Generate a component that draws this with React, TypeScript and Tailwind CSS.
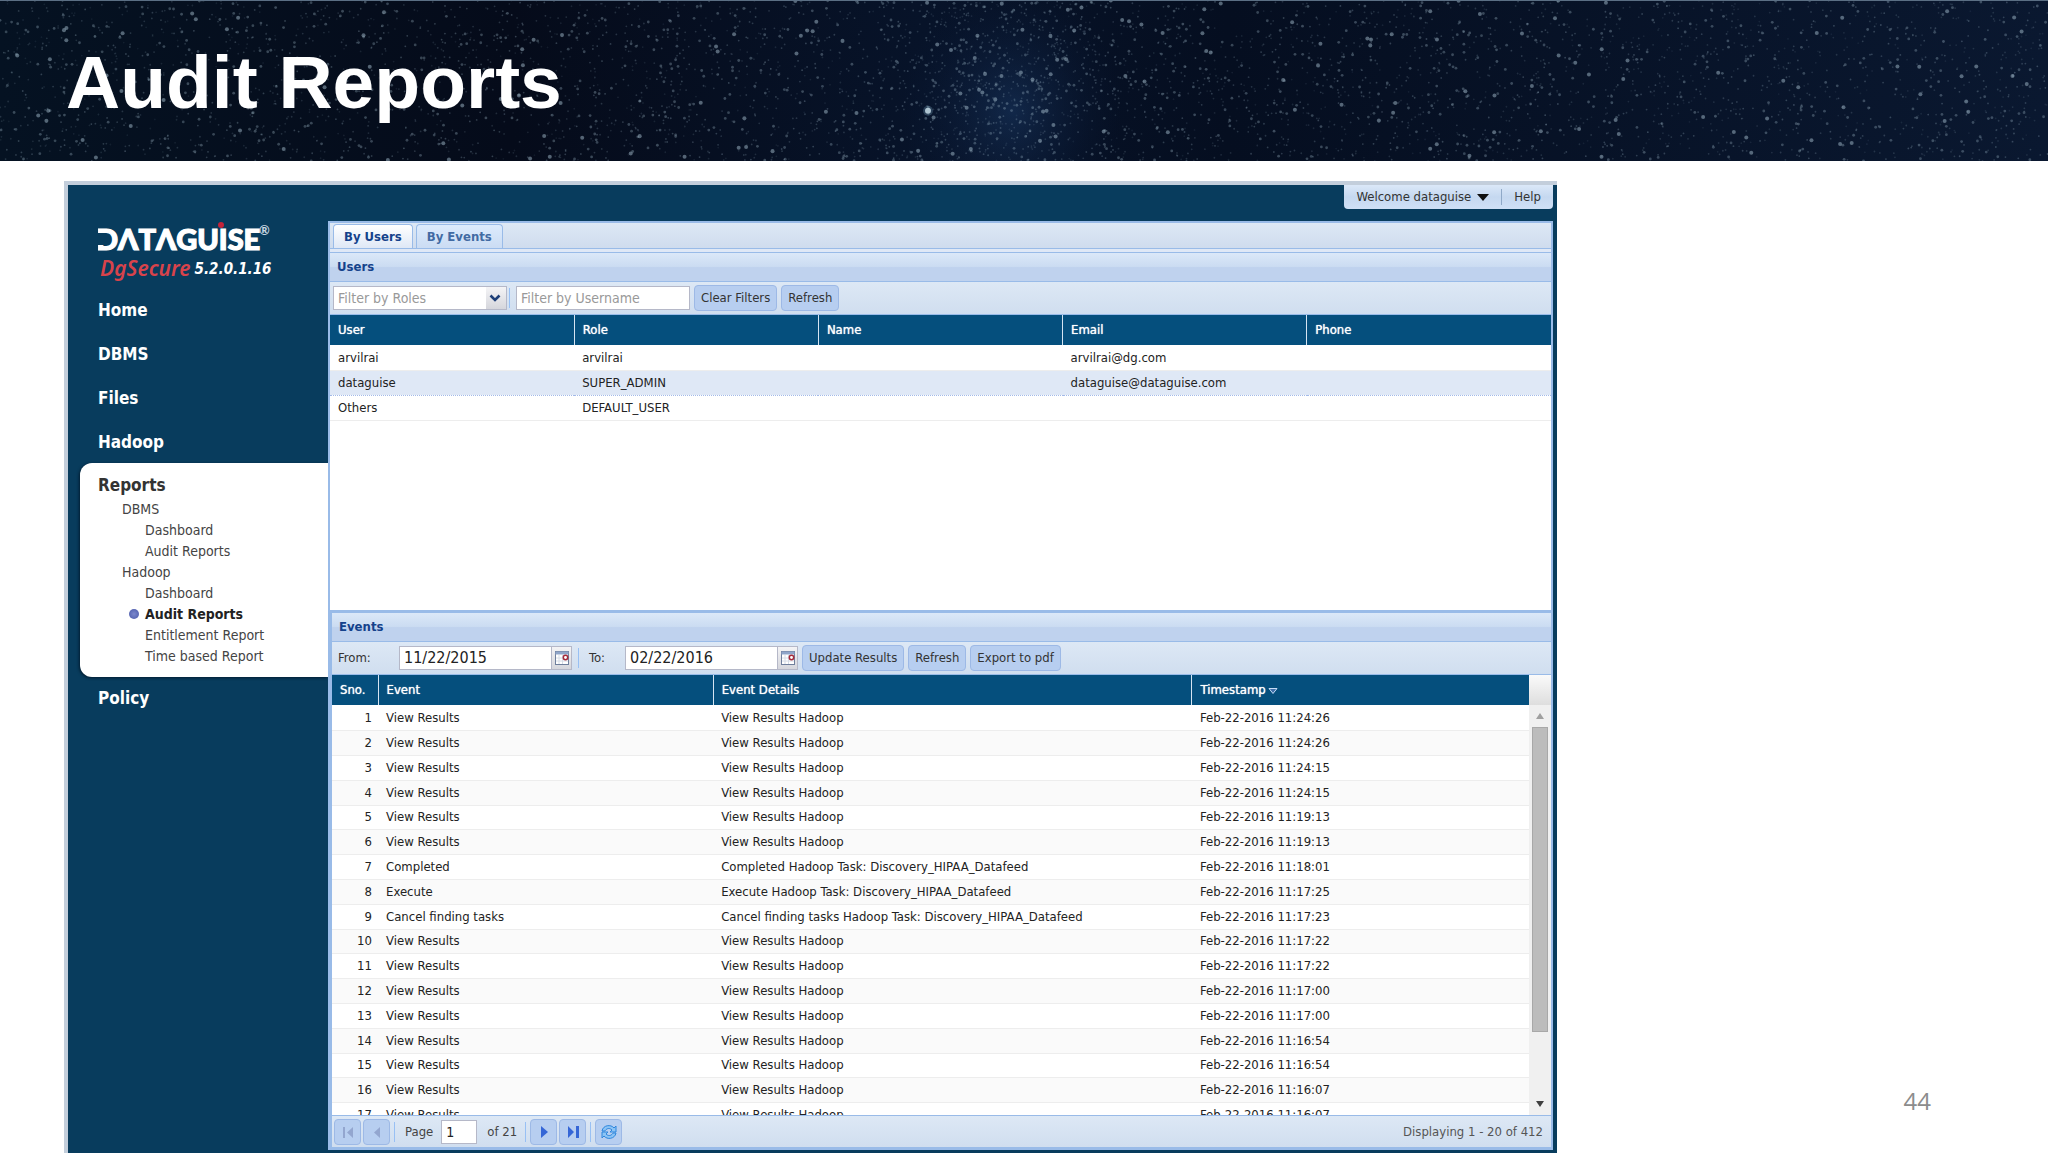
import type { ReactNode } from "react";
import clsx from "clsx";

const USER_COLUMNS = ["User", "Role", "Name", "Email", "Phone"];

const USERS = [
  { user: "arvilrai", role: "arvilrai", name: "", email: "arvilrai@dg.com", phone: "" },
  { user: "dataguise", role: "SUPER_ADMIN", name: "", email: "dataguise@dataguise.com", phone: "" },
  { user: "Others", role: "DEFAULT_USER", name: "", email: "", phone: "" },
];

const VIEW = ["View Results", "View Results Hadoop"];

const EVENTS = [
  [...VIEW, "11:24:26"],
  [...VIEW, "11:24:26"],
  [...VIEW, "11:24:15"],
  [...VIEW, "11:24:15"],
  [...VIEW, "11:19:13"],
  [...VIEW, "11:19:13"],
  ["Completed", "Completed Hadoop Task: Discovery_HIPAA_Datafeed", "11:18:01"],
  ["Execute", "Execute Hadoop Task: Discovery_HIPAA_Datafeed", "11:17:25"],
  ["Cancel finding tasks", "Cancel finding tasks Hadoop Task: Discovery_HIPAA_Datafeed", "11:17:23"],
  [...VIEW, "11:17:22"],
  [...VIEW, "11:17:22"],
  [...VIEW, "11:17:00"],
  [...VIEW, "11:17:00"],
  [...VIEW, "11:16:54"],
  [...VIEW, "11:16:54"],
  [...VIEW, "11:16:07"],
  [...VIEW, "11:16:07"],
];

const REPORT_LINKS = [
  { label: "DBMS", nested: false },
  { label: "Dashboard", nested: true },
  { label: "Audit Reports", nested: true },
  { label: "Hadoop", nested: false },
  { label: "Dashboard", nested: true },
  { label: "Audit Reports", nested: true, current: true },
  { label: "Entitlement Report", nested: true },
  { label: "Time based Report", nested: true },
];

// small seeded generator so the sky is the same on every render
function makeStars(count: number) {
  let seed = 44;
  const next = () => {
    seed = (seed * 16807) % 2147483647;
    return seed / 2147483647;
  };
  return Array.from({ length: count }, (_, i) => {
    const inCluster = i % 9 === 0;
    const spread = (next() + next() + next() - 1.5) * 150;
    const bright = next();
    return {
      x: inCluster ? 1010 + spread : next() * 2048,
      y: next() * 160,
      r: bright > 0.97 ? 2 : bright > 0.8 ? 1.4 : 0.9,
      o: bright > 0.97 ? 0.5 : 0.08 + bright * 0.28,
    };
  });
}

const STARS = makeStars(5200);

function NightSky() {
  return (
    <svg aria-hidden="true" className="absolute inset-0 size-full" preserveAspectRatio="none" viewBox="0 0 2048 160">
      <defs>
        <linearGradient id="sky">
          <stop offset="0" stopColor="#051222" />
          <stop offset="0.25" stopColor="#050b1a" />
          <stop offset="0.45" stopColor="#071329" />
          <stop offset="0.6" stopColor="#050e20" />
          <stop offset="1" stopColor="#0a1830" />
        </linearGradient>
        <radialGradient id="milky">
          <stop offset="0" stopColor="#1f4374" stopOpacity="0.45" />
          <stop offset="1" stopColor="#0b1c3c" stopOpacity="0" />
        </radialGradient>
      </defs>
      <rect fill="url(#sky)" height="160" width="2048" />
      <ellipse cx="1012" cy="110" fill="url(#milky)" rx="110" ry="130" />
      {STARS.map((s, i) => (
        <circle cx={s.x} cy={s.y} fill="#a3bccb" key={i} opacity={s.o} r={s.r} />
      ))}
      <circle cx="928" cy="110" fill="#8fc0dc" opacity="0.25" r="5" />
      <circle cx="928" cy="110" fill="#cfe6f0" opacity="0.8" r="3" />
      <rect fill="#5b6f84" height="1" width="2048" />
    </svg>
  );
}

function Logo() {
  return (
    <svg aria-label="DATAGUISE" className="h-9 w-44" role="img" viewBox="0 0 176 36">
      <text
        fill="#fff"
        fontFamily="Lato, sans-serif"
        fontSize="29"
        fontWeight="900"
        stroke="#fff"
        strokeWidth="1.2"
        x="-2"
        y="29"
      >
        DΛTΛGUISE
      </text>
      <rect fill="#083c5d" height="12" width="8" x="-2" y="12" />
      <circle cx="123" cy="4" fill="#c4243a" r="3" />
      <text fill="#c9d8e2" fontFamily="Lato, sans-serif" fontSize="13" x="161" y="14">
        ®
      </text>
    </svg>
  );
}

function CalendarIcon() {
  return (
    <svg aria-hidden="true" className="h-4 w-4" viewBox="0 0 16 16">
      <rect fill="#fff" height="13" stroke="#6f7f9c" width="13" x="1.5" y="1.5" />
      <rect fill="#8fa5c9" height="3" width="13" x="1.5" y="1.5" />
      <path d="M5 5v9M8.500 5v9M2 8h12M2 11h12" stroke="#d6dce6" />
      <circle cx="11.500" cy="7.500" fill="#fff" r="2.200" stroke="#a52a3a" strokeWidth="1.500" />
    </svg>
  );
}

function Bar({ children, className }: { children: ReactNode; className?: string }) {
  return (
    <div
      className={clsx(
        "flex shrink-0 items-center border-[#99bbe8] border-b bg-linear-to-b from-[#dde8f5] to-[#d0deef]",
        className,
      )}
    >
      {children}
    </div>
  );
}

function PanelTitle({ children }: { children: string }) {
  return (
    <h2 className="flex h-[30px] shrink-0 items-center border-[#99bbe8] border-y bg-linear-to-b from-[#dbe8f8] from-0% via-[#cbdcf2] via-48% to-[#bfd2ee] to-52% px-[7px] font-bold text-[#15428b] text-[13px]">
      {children}
    </h2>
  );
}

function HeaderCell({ children }: { children: ReactNode }) {
  return (
    <th className="border-[#d5e4f2] border-r px-2 font-normal [text-shadow:0_0_1px_#ffffff] last:border-r-0">
      {children}
    </th>
  );
}

function ToolButton({ children }: { children: string }) {
  return (
    <button
      className="h-[26px] shrink-0 rounded-sm border border-[#9db9e6] bg-[#b7cef0] px-1.5 text-[#333]"
      type="button"
    >
      {children}
    </button>
  );
}

function Divider() {
  return <span className="mx-0.5 h-5 w-px shrink-0 bg-[#98c0f4]" />;
}

function DateField({
  id,
  label,
  labelClassName,
  value,
}: {
  id: string;
  label: string;
  labelClassName: string;
  value: string;
}) {
  return (
    <>
      <label className={clsx("shrink-0 text-[#333]", labelClassName)} htmlFor={id}>
        {label}
      </label>
      <div className="flex h-6 w-[173px] border border-[#b5b8c8] bg-white">
        <input className="min-w-0 flex-1 px-1 text-[#222] text-base outline-none" defaultValue={value} id={id} />
        <button
          aria-label="Pick a date"
          className="flex w-5 items-center justify-center border-[#b5b8c8] border-l bg-linear-to-b from-[#f4f4f6] to-[#d5d6dc]"
          type="button"
        >
          <CalendarIcon />
        </button>
      </div>
    </>
  );
}

function PageButton({ children, disabled, label }: { children: ReactNode; disabled?: boolean; label: string }) {
  return (
    <button
      aria-label={label}
      className="flex h-[26px] w-[27px] shrink-0 items-center justify-center rounded-sm border border-[#9db9e6] bg-[#b7cef0]"
      disabled={disabled}
      type="button"
    >
      <svg aria-hidden="true" className="size-5" viewBox="0 0 20 20">
        {children}
      </svg>
    </button>
  );
}

function Sidebar() {
  return (
    <nav className="w-[260px] shrink-0 pl-3 font-bold text-[17px] text-white">
      <div className="flex flex-col pt-9 pl-[18px]">
        <Logo />
        <p className="flex h-6 items-center gap-1 pl-0.5 text-[15px] italic">
          <span className="font-['Noto_Sans',sans-serif] font-semibold text-[#d8434b] text-[21px]">DgSecure</span>
          5.2.0.1.16
        </p>
      </div>
      <ul className="mt-2 pl-[18px]">
        {["Home", "DBMS", "Files", "Hadoop"].map((item) => (
          <li className="flex h-11 items-center" key={item}>
            <a href="#top">{item}</a>
          </li>
        ))}
      </ul>
      <div className="-mt-0.5 h-[214px] rounded-l-xl bg-white pt-2.5 pl-[18px] text-[#333] shadow-[-1px_1px_3px_#021c30]">
        <a className="flex h-[25px] items-center" href="#reports">
          Reports
        </a>
        <ul className="font-normal text-[#444] text-sm">
          {REPORT_LINKS.map((link, i) => (
            <li className={clsx("relative flex h-[21px] items-center", link.nested ? "pl-[47px]" : "pl-6")} key={i}>
              {link.current && (
                <span className="absolute left-[31px] size-2.5 rounded-full bg-radial from-[#7c88cc] to-[#4a58a8]" />
              )}
              <a className={clsx(link.current && "font-bold text-[#222]")} href="#report">
                {link.label}
              </a>
            </li>
          ))}
        </ul>
      </div>
      <a className="flex h-11 items-center pl-[18px]" href="#policy">
        Policy
      </a>
    </nav>
  );
}

function UsersPanel() {
  return (
    <section className="flex h-[358px] shrink-0 flex-col bg-white">
      <PanelTitle>Users</PanelTitle>
      <Bar className="h-[33px] gap-1 px-[3px]">
        <select
          aria-label="Filter by Roles"
          className="h-6 w-[174px] appearance-none border border-[#b5b8c8] bg-white bg-[linear-gradient(#f4f4f6,#d5d6dc)] bg-[length:20px_100%] bg-right bg-no-repeat px-1 text-[#999] text-sm"
        >
          <option>Filter by Roles</option>
        </select>
        <svg aria-hidden="true" className="pointer-events-none mr-0.5 -ml-[22px] h-2 w-3" viewBox="0 0 12 8">
          <path d="M1.500 1.500 6 6l4.500-4.500" fill="none" stroke="#1f3f78" strokeWidth="2.600" />
        </svg>
        <Divider />
        <input
          aria-label="Filter by Username"
          className="h-6 w-[174px] border border-[#b5b8c8] bg-white px-1 text-sm placeholder:text-[#999]"
          placeholder="Filter by Username"
        />
        <ToolButton>Clear Filters</ToolButton>
        <ToolButton>Refresh</ToolButton>
      </Bar>
      <table className="w-full table-fixed text-left">
        <thead>
          <tr className="h-[30px] bg-[#054f7d] text-white">
            {USER_COLUMNS.map((name) => (
              <HeaderCell key={name}>{name}</HeaderCell>
            ))}
          </tr>
        </thead>
        <tbody>
          {USERS.map((row) => (
            <tr
              className="h-[25px] border-[#ededed] border-b even:border-[#a3bae9] even:border-y even:border-dotted even:bg-[#dfe8f6]"
              key={row.user}
            >
              {Object.values(row).map((value, i) => (
                <td className="px-2" key={i}>
                  {value}
                </td>
              ))}
            </tr>
          ))}
        </tbody>
      </table>
    </section>
  );
}

function EventsPanel() {
  return (
    <section className="flex min-h-0 flex-1 flex-col border-[#99bbe8] border-t-2 border-l-2 bg-white">
      <PanelTitle>Events</PanelTitle>
      <Bar className="h-[33px] gap-1 px-1">
        <DateField id="from" label="From:" labelClassName="w-[59px] pl-0.5" value="11/22/2015" />
        <Divider />
        <DateField id="to" label="To:" labelClassName="w-9 pl-1" value="02/22/2016" />
        <ToolButton>Update Results</ToolButton>
        <ToolButton>Refresh</ToolButton>
        <ToolButton>Export to pdf</ToolButton>
      </Bar>
      <div className="flex min-h-0 flex-1 overflow-hidden">
        <div className="min-w-0 flex-1">
          <table className="w-full table-fixed text-left">
            <colgroup>
              <col className="w-[46px]" />
              <col className="w-[28%]" />
              <col className="w-[40%]" />
              <col />
            </colgroup>
            <thead>
              <tr className="h-[30px] bg-[#054f7d] text-white">
                <HeaderCell>Sno.</HeaderCell>
                <HeaderCell>Event</HeaderCell>
                <HeaderCell>Event Details</HeaderCell>
                <HeaderCell>
                  Timestamp
                  <svg aria-hidden="true" className="ml-0.5 inline h-2 w-2.5" viewBox="0 0 10 8">
                    <path d="M1 1.500h8L5 6.500Z" fill="#3f6ea8" stroke="#c6dcf5" />
                  </svg>
                </HeaderCell>
              </tr>
            </thead>
            <tbody>
              {EVENTS.map(([event, details, time], i) => (
                <tr className="h-[25px] border-[#ededed] border-b even:bg-[#fafafa] nth-[5n]:h-6" key={i}>
                  <td className="px-1.5 text-right">{i + 1}</td>
                  <td className="px-2">{event}</td>
                  <td className="px-2">{details}</td>
                  <td className="px-2">Feb-22-2016 {time}</td>
                </tr>
              ))}
            </tbody>
          </table>
        </div>
        <div className="flex w-[22px] flex-col items-center bg-[#f0f0f0]">
          <div className="h-[30px] w-full shrink-0 bg-linear-to-b from-[#fafafa] to-[#dedede]" />
          <svg aria-hidden="true" className="my-2 h-1.5 w-2 shrink-0" viewBox="0 0 8 6">
            <path d="M0 6 4 0l4 6Z" fill="#a0a0a0" />
          </svg>
          <div className="h-[305px] w-4 border border-[#a8a8a8] bg-[#bcbcbc]" />
          <svg aria-hidden="true" className="mt-auto mb-2 h-1.5 w-2 shrink-0" viewBox="0 0 8 6">
            <path d="M0 0h8L4 6Z" fill="#404040" />
          </svg>
        </div>
      </div>
      <Bar className="h-8 gap-0.5 border-t border-b-0 px-0.5">
        <PageButton disabled label="First page">
          <path d="M5 5h2v11H5ZM15 5v11l-6-5.500Z" fill="#93a6cf" />
        </PageButton>
        <PageButton disabled label="Previous page">
          <path d="M13 5v11l-6-5.500Z" fill="#93a6cf" />
        </PageButton>
        <Divider />
        <label className="px-1.5 text-[#444]" htmlFor="page">
          Page
        </label>
        <input className="h-6 w-9 border border-[#b5b8c8] bg-white px-1 text-sm" defaultValue="1" id="page" />
        <span className="pr-1 pl-2 text-[#444]">of 21</span>
        <Divider />
        <PageButton label="Next page">
          <path d="M7 4v12l7-6Z" fill="#3566d6" />
        </PageButton>
        <PageButton label="Last page">
          <path d="M5 4v12l6-6ZM13 4h3v12h-3Z" fill="#3566d6" />
        </PageButton>
        <Divider />
        <PageButton label="Reload">
          <path d="M3 9c1-6 9-7 12-3l2-2v6h-6l2-2c-3-3-6-1-7 1Z" fill="#8cc4f5" stroke="#2f86dc" />
          <path d="M17 11c-1 6-9 7-12 3l-2 2v-6h6l-2 2c3 3 6 1 7-1Z" fill="#8cc4f5" stroke="#2f86dc" />
        </PageButton>
        <span className="ml-auto px-1.5 text-[#555]">Displaying 1 - 20 of 412</span>
      </Bar>
    </section>
  );
}

export default function App() {
  return (
    <div className="flex h-screen flex-col bg-white" id="top">
      <header className="relative flex h-[161px] shrink-0 items-center overflow-hidden bg-[#050c1c] px-[66px] pt-1">
        <NightSky />
        <h1 className="relative font-['Liberation_Sans',Arial,sans-serif] font-bold text-[75px] text-white leading-none">
          Audit Reports
        </h1>
      </header>
      <main className="flex min-h-0 flex-1 pt-5 pl-16">
        <div className="flex min-w-0 flex-1 flex-col border-[#c3cedb] border-t-4 border-l-4 bg-[#083c5d] pr-1 pb-[3px] font-['DejaVu_Sans_Condensed','DejaVu_Sans',sans-serif] text-[13px] text-[#222]">
          <div className="flex min-h-0 flex-1">
            <Sidebar />
            <div className="flex min-w-0 flex-1 flex-col">
              <div className="flex h-9 shrink-0 items-start justify-end">
                <div className="flex h-6 items-center rounded-b-sm bg-linear-to-b from-[#dbe8f8] from-0% via-[#c5d8f0] via-50% to-[#cfe0f6] to-100% px-3 text-[#333]">
                  <button className="flex items-center gap-1.5" type="button">
                    Welcome dataguise
                    <svg aria-hidden="true" className="h-[7px] w-3" viewBox="0 0 12 7">
                      <path d="M0 0h12L6 7Z" fill="#111" />
                    </svg>
                  </button>
                  <span className="mx-3 h-4 w-px bg-[#8fa9c8]" />
                  <a href="#help">Help</a>
                </div>
              </div>
              <div className="flex min-h-0 flex-1 flex-col border-2 border-[#99bbe8] border-b-[3px] bg-[#dfe8f6]">
                <div
                  className="flex h-[26px] shrink-0 items-end gap-[3px] border-[#99bbe8] border-b bg-linear-to-b from-[#dde8f5] to-[#cfdcee] px-[3px] font-bold"
                  role="tablist"
                >
                  <button
                    aria-selected="true"
                    className="h-6 rounded-t-sm border border-[#99bbe8] border-b-0 bg-linear-to-b from-white to-[#dfe8f6] px-2.5 text-[#15428b]"
                    role="tab"
                    type="button"
                  >
                    By Users
                  </button>
                  <button
                    aria-selected="false"
                    className="h-6 rounded-t-sm border border-[#99bbe8] border-b-0 bg-linear-to-b from-[#dcebfd] to-[#cbdcf3] px-2.5 text-[#416aa3]"
                    role="tab"
                    type="button"
                  >
                    By Events
                  </button>
                </div>
                <div className="flex min-h-0 flex-1 flex-col pt-[3px]">
                  <UsersPanel />
                  <EventsPanel />
                </div>
              </div>
            </div>
          </div>
        </div>
        <aside className="flex w-[491px] shrink-0 items-end justify-end pr-[117px] pb-9 font-['Open_Sans',sans-serif] text-2xl text-[#8c8c8c]">
          44
        </aside>
      </main>
    </div>
  );
}
